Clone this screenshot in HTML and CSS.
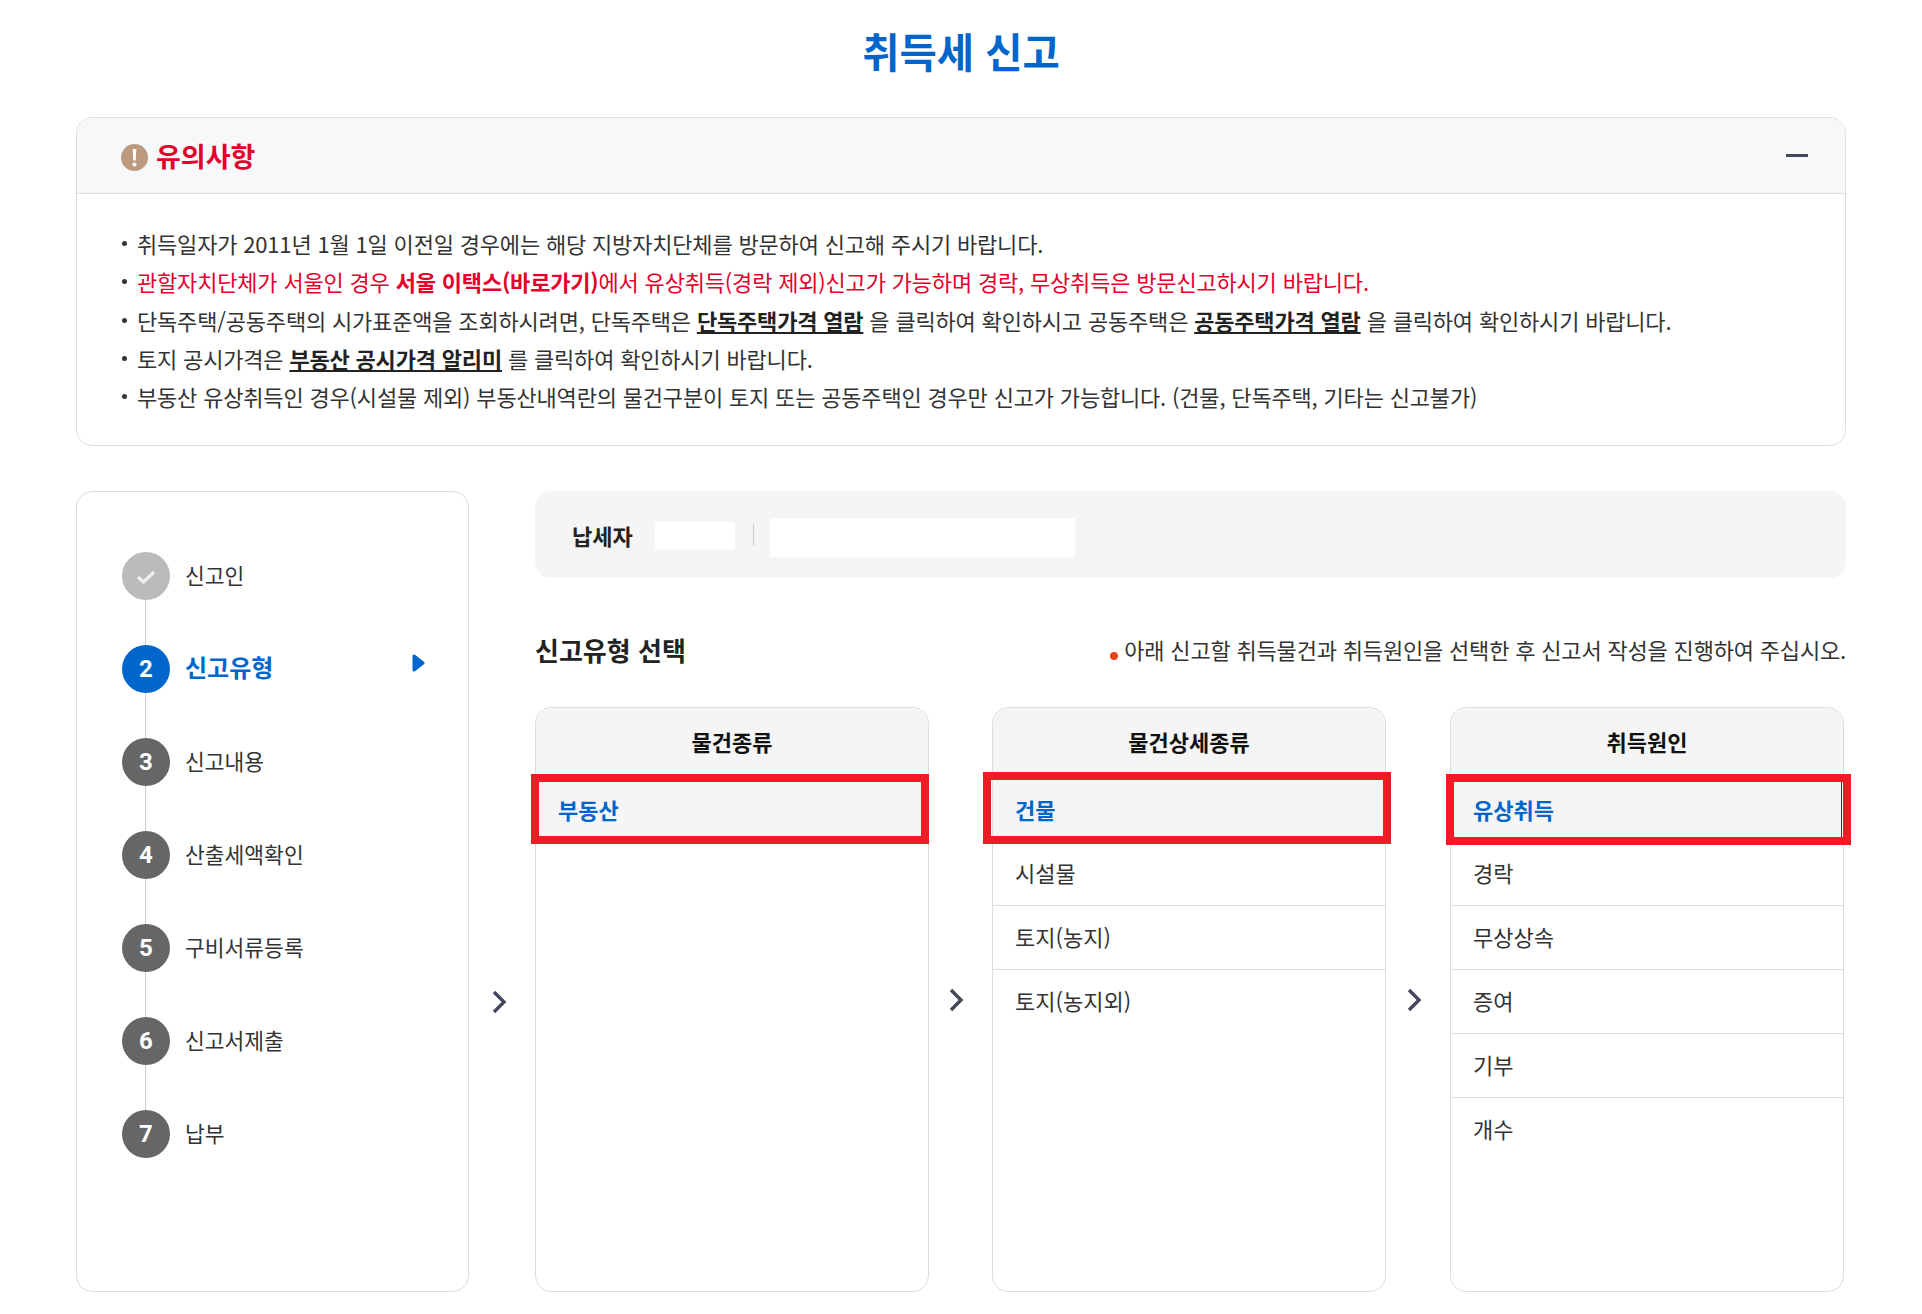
FILE: index.html
```html
<!DOCTYPE html>
<html lang="ko">
<head>
    <meta charset="UTF-8">
    <title>취득세 신고</title>
    <link rel="stylesheet" href="styles.css">
</head>
<body>
    <div class="page">
        <h1 class="page-title">취득세 신고</h1>

        <section class="notice">
            <div class="notice-head">
                <div class="notice-title">
                    <svg class="notice-icon" width="27" height="27" viewBox="0 0 27 27">
                        <circle cx="13.5" cy="13.5" r="13.5" fill="#bb9a80"/>
                        <path d="M11.6 5h3.8l-.7 11.5h-2.4z" fill="#fff"/>
                        <circle cx="13.5" cy="20.5" r="2" fill="#fff"/>
                    </svg>
                    <span>유의사항</span>
                </div>
                <span class="notice-toggle"></span>
            </div>
            <ul class="notice-list">
                <li>취득일자가 2011년 1월 1일 이전일 경우에는 해당 지방자치단체를 방문하여 신고해 주시기 바랍니다.</li>
                <li class="red">관할자치단체가 서울인 경우 <b>서울 이택스(바로가기)</b>에서 유상취득(경락 제외)신고가 가능하며 경락, 무상취득은 방문신고하시기 바랍니다.</li>
                <li>단독주택/공동주택의 시가표준액을 조회하시려면, 단독주택은 <a href="#">단독주택가격 열람</a> 을 클릭하여 확인하시고 공동주택은 <a href="#">공동주택가격 열람</a> 을 클릭하여 확인하시기 바랍니다.</li>
                <li>토지 공시가격은 <a href="#">부동산 공시가격 알리미</a> 를 클릭하여 확인하시기 바랍니다.</li>
                <li>부동산 유상취득인 경우(시설물 제외) 부동산내역란의 물건구분이 토지 또는 공동주택인 경우만 신고가 가능합니다. (건물, 단독주택, 기타는 신고불가)</li>
            </ul>
        </section>

        <div class="main">
            <nav class="steps">
                <div class="step done">
                    <span class="step-num">
                        <svg width="20" height="16" viewBox="0 0 20 16"><path d="M2 8l5.5 5L18 3" fill="none" stroke="#eee" stroke-width="3.4"/></svg>
                    </span>
                    <span class="step-label">신고인</span>
                </div>
                <div class="step active">
                    <span class="step-num">2</span>
                    <span class="step-label">신고유형</span>
                    <svg class="step-mark" width="13" height="18" viewBox="0 0 13 18"><path d="M2 2l9 7-9 7z" fill="#0066cc" stroke="#0066cc" stroke-width="3" stroke-linejoin="round"/></svg>
                </div>
                <div class="step">
                    <span class="step-num">3</span>
                    <span class="step-label">신고내용</span>
                </div>
                <div class="step">
                    <span class="step-num">4</span>
                    <span class="step-label">산출세액확인</span>
                </div>
                <div class="step">
                    <span class="step-num">5</span>
                    <span class="step-label">구비서류등록</span>
                </div>
                <div class="step">
                    <span class="step-num">6</span>
                    <span class="step-label">신고서제출</span>
                </div>
                <div class="step">
                    <span class="step-num">7</span>
                    <span class="step-label">납부</span>
                </div>
            </nav>

            <div class="arrow arrow-first">
                <svg width="15" height="24" viewBox="0 0 15 24"><path d="M2 2l10 10L2 22" fill="none" stroke="#44475a" stroke-width="3.4"/></svg>
            </div>

            <div class="content">
                <div class="payer">
                    <span class="payer-label">납세자</span>
                    <span class="payer-box small"></span>
                    <span class="payer-sep"></span>
                    <span class="payer-box large"></span>
                </div>

                <div class="section-head">
                    <h2>신고유형 선택</h2>
                    <p><span class="dot"></span>아래 신고할 취득물건과 취득원인을 선택한 후 신고서 작성을 진행하여 주십시오.</p>
                </div>

                <div class="columns">
                    <div class="panel">
                        <div class="panel-head">물건종류</div>
                        <ul class="panel-list">
                            <li class="selected first-box">부동산</li>
                        </ul>
                    </div>
                    <div class="arrow">
                        <svg width="15" height="24" viewBox="0 0 15 24"><path d="M2 2l10 10L2 22" fill="none" stroke="#44475a" stroke-width="3.4"/></svg>
                    </div>
                    <div class="panel">
                        <div class="panel-head">물건상세종류</div>
                        <ul class="panel-list">
                            <li class="selected second-box">건물</li>
                            <li>시설물</li>
                            <li>토지(농지)</li>
                            <li>토지(농지외)</li>
                        </ul>
                    </div>
                    <div class="arrow arrow-wide">
                        <svg width="15" height="24" viewBox="0 0 15 24"><path d="M2 2l10 10L2 22" fill="none" stroke="#44475a" stroke-width="3.4"/></svg>
                    </div>
                    <div class="panel">
                        <div class="panel-head">취득원인</div>
                        <ul class="panel-list">
                            <li class="selected third-box">유상취득</li>
                            <li>경락</li>
                            <li>무상상속</li>
                            <li>증여</li>
                            <li>기부</li>
                            <li>개수</li>
                        </ul>
                    </div>
                </div>
            </div>
        </div>
    </div>
</body>
</html>
```

FILE: styles.css
```css
* {
    margin: 0;
    padding: 0;
    box-sizing: border-box;
}

body {
    background: #fff;
    font-family: "Noto Sans CJK KR", "Noto Sans", sans-serif;
    color: #333;
    overflow: hidden;
}

ul {
    list-style: none;
}

.page {
    width: 1922px;
    height: 1314px;
    padding: 0 76px;
}

.page-title {
    height: 117px;
    padding-top: 19px;
    font-size: 40.5px;
    line-height: 64px;
    font-weight: 700;
    color: #0066cc;
    text-align: center;
}

/* 유의사항 */
.notice {
    width: 1770px;
    height: 329px;
    border: 1px solid #dddddd;
    border-radius: 16px;
    overflow: hidden;
}

.notice-head {
    height: 76px;
    padding: 0 37px 0 44px;
    display: flex;
    justify-content: space-between;
    align-items: center;
    background: #f7f8fa;
    border-bottom: 1px solid #dddddd;
}

.notice-title {
    display: flex;
    align-items: center;
    gap: 8px;
    font-size: 27px;
    font-weight: 700;
    color: #e4002b;
}

.notice-icon {
    margin-top: 4px;
}

.notice-toggle {
    width: 22px;
    height: 3px;
    background: #44475a;
}

.notice-list {
    padding: 30px 44px 0;
    font-size: 22px;
    letter-spacing: -0.18px;
    line-height: 38.3px;
}

.notice-list li {
    padding-left: 16px;
    position: relative;
}

.notice-list li::before {
    content: "";
    position: absolute;
    left: 1px;
    top: 17px;
    width: 5px;
    height: 5px;
    border-radius: 50%;
    background: #333;
}

.notice-list .red {
    color: #e4002b;
}

.notice-list a {
    color: #222;
    font-weight: 700;
    text-decoration: underline;
}

/* 단계 */
.main {
    display: flex;
    width: 1770px;
    margin-top: 45px;
}

.steps {
    width: 393px;
    height: 801px;
    flex-shrink: 0;
    padding-top: 60px;
    padding-left: 45px;
    border: 1px solid #dddddd;
    border-radius: 16px;
}

.step {
    height: 93px;
    display: flex;
    align-items: flex-start;
    gap: 15px;
    position: relative;
}

.step::before {
    content: "";
    position: absolute;
    left: 23px;
    top: 48px;
    width: 1px;
    height: 45px;
    background: #ccc;
}

.step:last-child::before {
    display: none;
}

.step-num {
    width: 48px;
    height: 48px;
    flex-shrink: 0;
    display: flex;
    align-items: center;
    justify-content: center;
    border-radius: 50%;
    background: #666;
    color: #fff;
    font-family: "Roboto", sans-serif;
    font-size: 24px;
    font-weight: 700;
}

.step-label {
    font-size: 21.5px;
    line-height: 46px;
}

.step.done .step-num {
    background: #bbb;
}

.step.done .step-num svg {
    margin-top: 2px;
}

.step.active .step-num {
    background: #0066cc;
}

.step.active .step-label {
    color: #0066cc;
    font-size: 24px;
    line-height: 43px;
    font-weight: 700;
}

.step-mark {
    position: absolute;
    left: 290px;
    top: 9px;
}

.arrow {
    width: 63px;
    flex-shrink: 0;
    padding: 1px 8px 0 0;
    display: flex;
    align-items: center;
    justify-content: center;
}

.arrow-wide {
    width: 64px;
}

.arrow-first {
    width: 66px;
    padding: 0 6px 0 0;
    align-self: flex-end;
    margin-bottom: 278px;
}

/* 신고유형 */
.content {
    flex: 1;
}

.payer {
    height: 87px;
    padding: 0 0 0 37px;
    display: flex;
    align-items: center;
    background: #f5f5f5;
    border-radius: 16px;
}

.payer-label {
    width: 83px;
    font-size: 22px;
    font-weight: 700;
    color: #222;
}

.payer-box {
    background: #fff;
}

.payer-box.small {
    width: 80px;
    height: 27px;
    margin-top: 2px;
}

.payer-sep {
    width: 1px;
    height: 22px;
    margin: 0 16px 0 18px;
    background: #ccc;
}

.payer-box.large {
    width: 305px;
    height: 39px;
    margin-top: 6px;
}

.section-head {
    height: 129px;
    padding-top: 13px;
    display: flex;
    justify-content: space-between;
    align-items: center;
}

.section-head h2 {
    font-size: 26px;
    font-weight: 700;
    color: #222;
}

.section-head p {
    font-size: 22px;
    letter-spacing: -0.18px;
}

.dot {
    display: inline-block;
    width: 8px;
    height: 8px;
    margin-right: 6px;
    border-radius: 50%;
    background: #e8431a;
    vertical-align: -1px;
}

.columns {
    display: flex;
    height: 585px;
}

.panel {
    width: 394px;
    flex-shrink: 0;
    border: 1px solid #dddddd;
    border-radius: 16px;
    background: #fff;
}

.panel-head {
    height: 68px;
    border-radius: 16px 16px 0 0;
    background: #f5f5f5;
    font-size: 22px;
    font-weight: 700;
    line-height: 67px;
    color: #111;
    text-align: center;
}

.panel-list li {
    height: 64px;
    padding-left: 22px;
    border-bottom: 1px solid #dddddd;
    font-size: 22px;
    line-height: 61px;
    position: relative;
}

.panel-list li:last-child {
    border-bottom: none;
}

.panel-list .selected {
    height: 66px;
    background: #f5f5f5;
    color: #0066cc;
    font-weight: 700;
    line-height: 66px;
}

/* 빨간 표시 박스 */
.panel-list .selected::after {
    content: "";
    position: absolute;
    border: 8px solid #ee1c25;
}

.first-box::after {
    left: -5px;
    right: -1px;
    top: -2px;
    bottom: -2px;
}

.second-box::after {
    left: -10px;
    right: -6px;
    top: -4px;
    bottom: -3px;
}

.third-box::after {
    left: -5px;
    right: -8px;
    top: -2px;
    bottom: -4px;
}

.third-box::before {
    content: "";
    position: absolute;
    right: 1px;
    top: 6px;
    bottom: 0;
    width: 1px;
    background: #333;
}
```
